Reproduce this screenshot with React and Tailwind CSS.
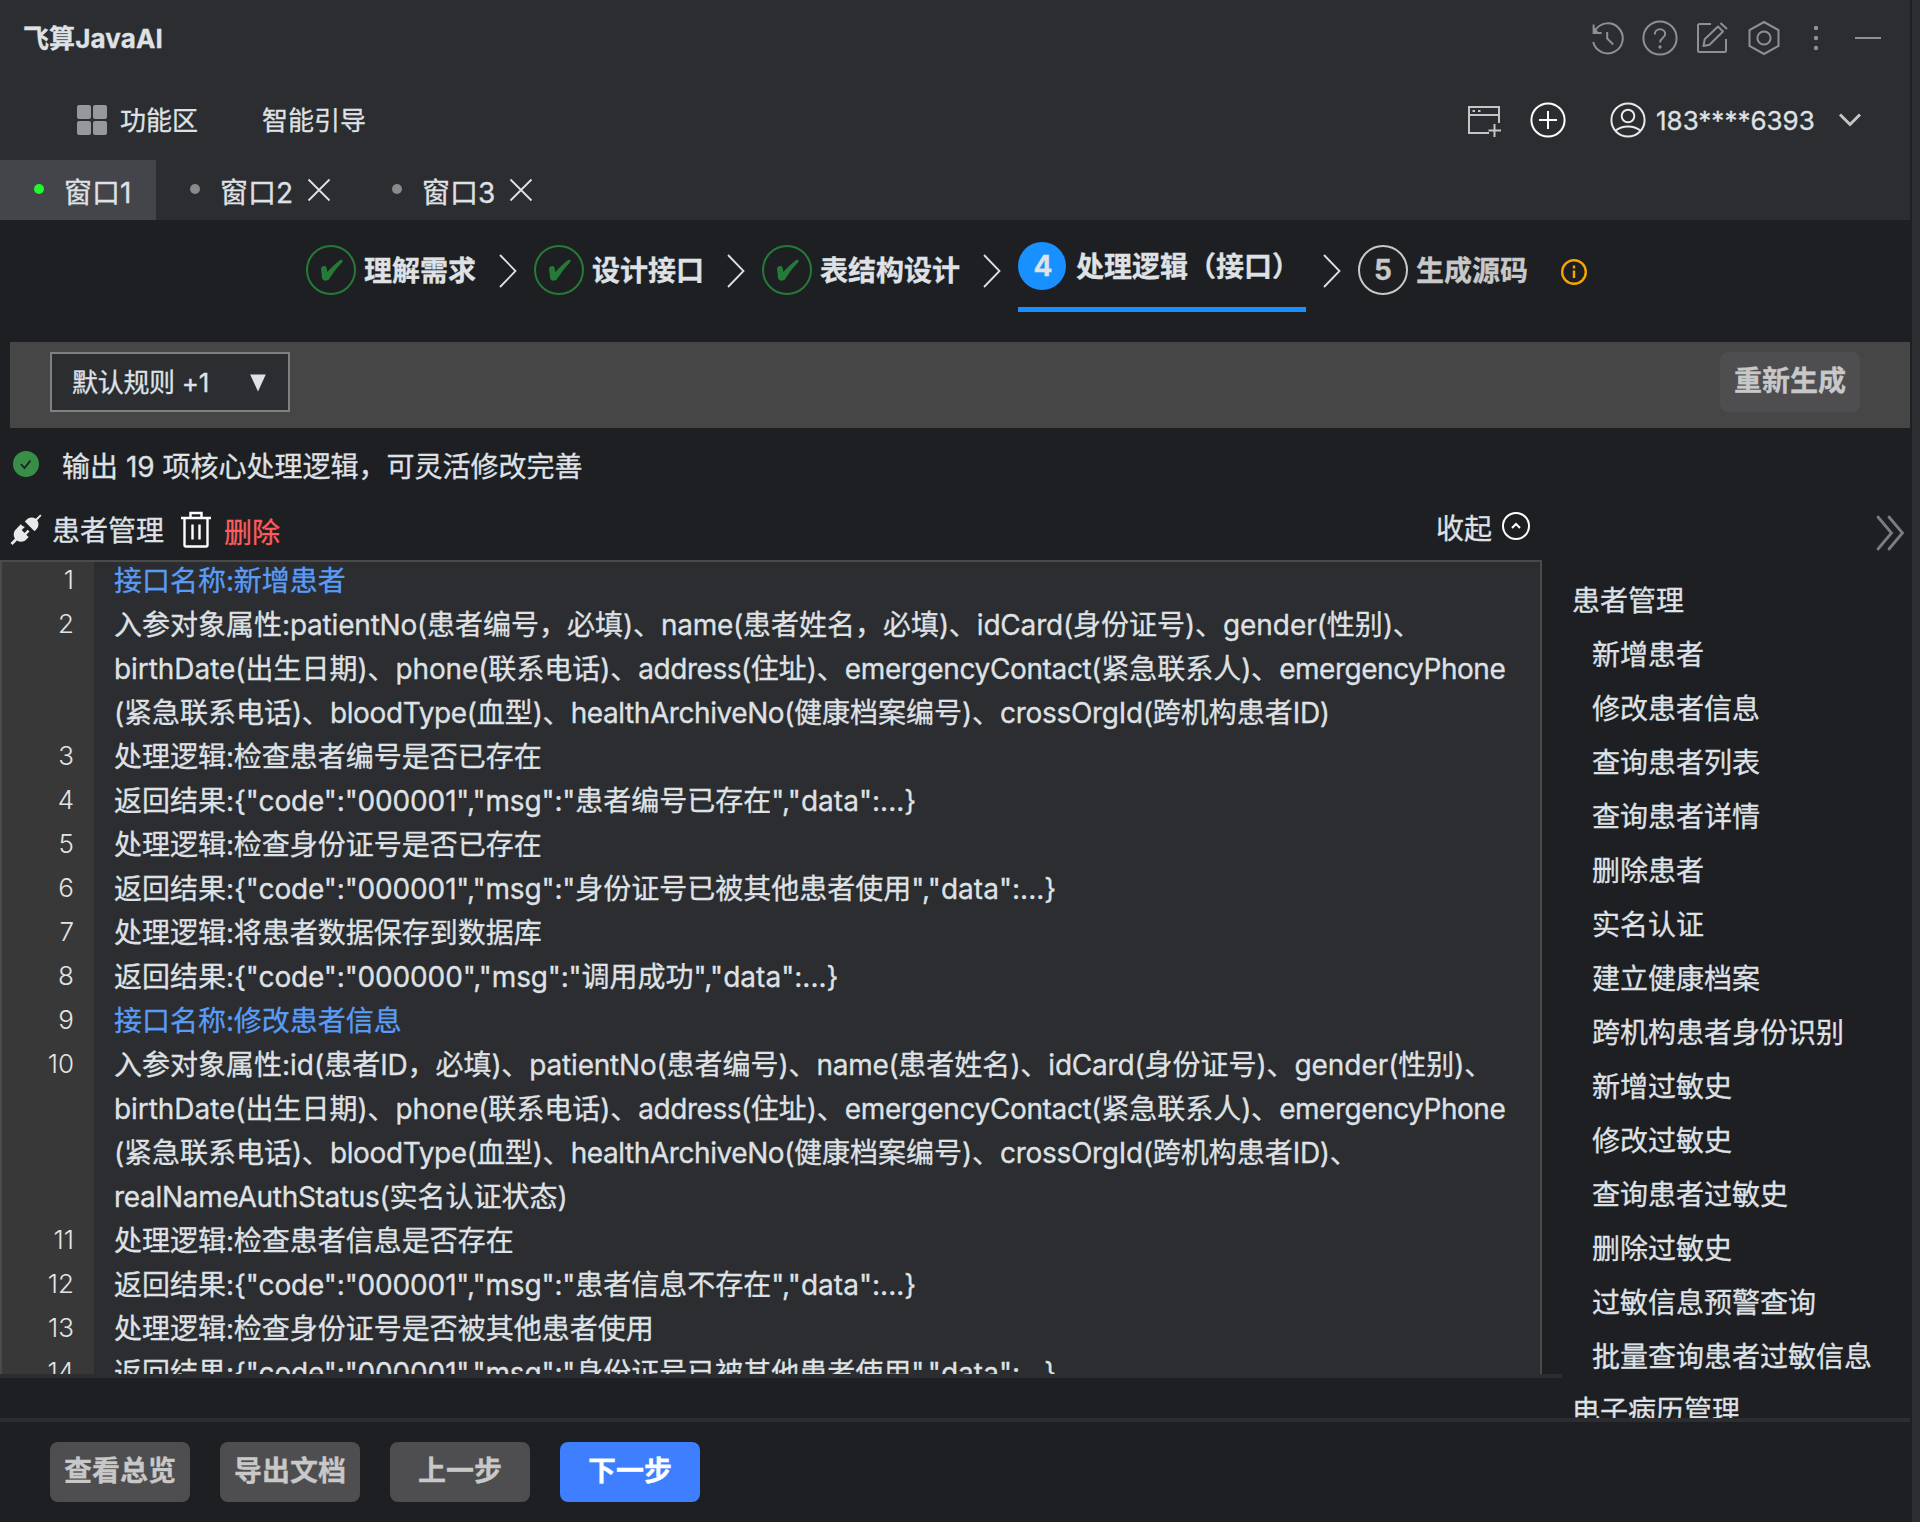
const steps = [
  { label: "理解需求", state: "done" },
  { label: "设计接口", state: "done" },
  { label: "表结构设计", state: "done" },
];

const code = [
  { n: 1, title: true, rows: ["接口名称:新增患者"] },
  {
    n: 2,
    rows: [
      "入参对象属性:patientNo(患者编号，必填)、name(患者姓名，必填)、idCard(身份证号)、gender(性别)、",
      "birthDate(出生日期)、phone(联系电话)、address(住址)、emergencyContact(紧急联系人)、emergencyPhone",
      "(紧急联系电话)、bloodType(血型)、healthArchiveNo(健康档案编号)、crossOrgId(跨机构患者ID)",
    ],
  },
  { n: 3, rows: ["处理逻辑:检查患者编号是否已存在"] },
  { n: 4, rows: ['返回结果:{"code":"000001","msg":"患者编号已存在","data":...}'] },
  { n: 5, rows: ["处理逻辑:检查身份证号是否已存在"] },
  { n: 6, rows: ['返回结果:{"code":"000001","msg":"身份证号已被其他患者使用","data":...}'] },
  { n: 7, rows: ["处理逻辑:将患者数据保存到数据库"] },
  { n: 8, rows: ['返回结果:{"code":"000000","msg":"调用成功","data":...}'] },
  { n: 9, title: true, rows: ["接口名称:修改患者信息"] },
  {
    n: 10,
    rows: [
      "入参对象属性:id(患者ID，必填)、patientNo(患者编号)、name(患者姓名)、idCard(身份证号)、gender(性别)、",
      "birthDate(出生日期)、phone(联系电话)、address(住址)、emergencyContact(紧急联系人)、emergencyPhone",
      "(紧急联系电话)、bloodType(血型)、healthArchiveNo(健康档案编号)、crossOrgId(跨机构患者ID)、",
      "realNameAuthStatus(实名认证状态)",
    ],
  },
  { n: 11, rows: ["处理逻辑:检查患者信息是否存在"] },
  { n: 12, rows: ['返回结果:{"code":"000001","msg":"患者信息不存在","data":...}'] },
  { n: 13, rows: ["处理逻辑:检查身份证号是否被其他患者使用"] },
  { n: 14, rows: ['返回结果:{"code":"000001","msg":"身份证号已被其他患者使用","data":...}'] },
];

const outline = [
  "新增患者",
  "修改患者信息",
  "查询患者列表",
  "查询患者详情",
  "删除患者",
  "实名认证",
  "建立健康档案",
  "跨机构患者身份识别",
  "新增过敏史",
  "修改过敏史",
  "查询患者过敏史",
  "删除过敏史",
  "过敏信息预警查询",
  "批量查询患者过敏信息",
];

/* Tracking of Latin runs, keyed by the letters they hold. */
const tracking = {
  patientNo: "tracking-[-0.2px]",
  idCard: "tracking-[-0.2px]",
  id: "tracking-[0px]",
  gender: "tracking-[-0.05px]",
  birthDate: "tracking-[-0.05px]",
  phone: "tracking-[-0.12px]",
  address: "tracking-[-0.45px]",
  emergencyContact: "tracking-[-0.37px]",
  emergencyPhone: "tracking-[-0.47px]",
  bloodType: "tracking-[-0.36px]",
  healthArchiveNo: "tracking-[-0.42px]",
  codemsg: "tracking-[-0.15px]",
  data: "tracking-[0.03px]",
};

function CodeText({ text }) {
  return text.split(/([\x20-\x7e]+)/).map((part, i) =>
    i % 2 ? (
      <span key={i} className={tracking[part.replace(/[^A-Za-z]/g, "")] || "tracking-[-0.3px]"}>
        {part}
      </span>
    ) : (
      part
    ),
  );
}

function Svg({ w, h, className = "", children, sw = 2 }) {
  return (
    <svg
      width={w}
      height={h}
      viewBox={`0 0 ${w} ${h}`}
      fill="none"
      stroke="currentColor"
      strokeWidth={sw}
      className={`block shrink-0 ${className}`}
    >
      {children}
    </svg>
  );
}

function TitleBar() {
  return (
    <div className="flex h-20 items-center justify-between pl-[23px] pr-[29px]">
      <span className="-mt-1 text-[26px] font-bold tracking-[0.1px]">飞算JavaAI</span>
      <div className="-mt-1 flex items-center text-[#8f9093]">
        <Svg w={36} h={36} className="mr-4">
          <path d="M3.200 22A15 15 0 1 0 5.500 9.700" />
          <path d="M3.600 4.500v8.600h8" />
          <path d="M4 12.500V8.500l3 3.500z" fill="currentColor" />
          <path d="M17.200 12v6.500l6 6" />
        </Svg>
        <Svg w={36} h={36} className="mr-4">
          <circle cx="18" cy="18" r="16.600" />
          <path d="M12.800 14.500c0-3.200 2.300-5.200 5.200-5.200s5.200 2 5.200 4.700c0 4-5.200 4.200-5.200 8.500" />
          <circle cx="18" cy="27" r="1.700" fill="currentColor" stroke="none" />
        </Svg>
        <Svg w={36} h={36} className="mr-4">
          <path d="M17 4H5.500a1.500 1.500 0 0 0-1.500 1.500v25A1.500 1.500 0 0 0 5.500 32h25a1.500 1.500 0 0 0 1.500-1.500V19" />
          <path d="m9.500 26 1.200-6.800L24 6.500l5 5-13.500 13.300z" strokeLinejoin="round" />
          <path d="m26.500 3 6.500 6" />
        </Svg>
        <Svg w={36} h={36} className="mr-[18px]">
          <path d="M18 2l14.500 8v16L18 34 3.500 26V10z" />
          <circle cx="18" cy="18" r="6.600" />
        </Svg>
        <Svg w={32} h={36} className="mr-[23px]">
          <g fill="currentColor" stroke="none">
            <circle cx="16" cy="8" r="2.200" />
            <circle cx="16" cy="18" r="2.200" />
            <circle cx="16" cy="28" r="2.200" />
          </g>
        </Svg>
        <div className="h-[2px] w-[26px] bg-[#8f9093]" />
      </div>
    </div>
  );
}

function MenuBar() {
  return (
    <div className="flex h-20 items-center justify-between pl-[77px] pr-[48px] text-[26px]">
      <div className="flex items-center">
        <div className="grid grid-cols-2 gap-[2px]">
          <i className="h-[14px] w-[14px] rounded-[2px] bg-[#97989b]" />
          <i className="h-[14px] w-[14px] rounded-[2px] bg-[#97989b]" />
          <i className="h-[14px] w-[14px] rounded-[2px] bg-[#97989b]" />
          <i className="h-[14px] w-[14px] rounded-[2px] bg-[#97989b]" />
        </div>
        <span className="ml-[13px] mt-[1px]">功能区</span>
        <span className="ml-[64px] mt-[1px]">智能引导</span>
      </div>
      <div className="flex items-center">
        <Svg w={38} h={36} className="mr-[26px] text-[#c4c5c7]">
          <path d="M33 21V5H3v26h20M3 13h30" />
          <path d="M28.500 22v13M22.500 28.500h12.500" />
          <path d="M6.500 9h2.500M12 9h2.500" />
        </Svg>
        <Svg w={36} h={36} className="mr-11 text-white">
          <circle cx="18" cy="18" r="16.600" />
          <path d="M9 18h18M18 9v18" />
        </Svg>
        <Svg w={36} h={36} className="mr-[10px] text-[#e8e9eb]">
          <circle cx="18" cy="18" r="16.600" />
          <circle cx="18" cy="14" r="6.300" />
          <path d="M5.500 28.500c7-5.500 18-5.500 25 0" />
        </Svg>
        <span className="w-[182px] whitespace-nowrap">183****6393</span>
        <Svg w={24} h={16} sw={3} className="text-[#c4c5c7]">
          <path d="m2 2.500 10 10 10-10" />
        </Svg>
      </div>
    </div>
  );
}

function CloseIcon() {
  return (
    <Svg w={24} h={24} sw={1.8} className="ml-[14px]">
      <path d="m1.500 1.500 21 21M22.500 1.500l-21 21" />
    </Svg>
  );
}

function WindowTabs() {
  return (
    <div className="flex h-[60px] text-[28px]">
      <div className="flex w-[156px] items-center bg-[#43454a] pl-[34px]">
        <i className="-mt-[2px] h-[10px] w-[10px] rounded-full bg-[#1ffa2f]" />
        <span className="ml-[20px] mt-[5px]">窗口1</span>
      </div>
      <div className="flex w-[202px] items-center pl-[34px]">
        <i className="-mt-[2px] h-[10px] w-[10px] rounded-full bg-[#8a8a8a]" />
        <span className="ml-[20px] mt-[5px]">窗口2</span>
        <CloseIcon />
      </div>
      <div className="flex w-[202px] items-center pl-[34px]">
        <i className="-mt-[2px] h-[10px] w-[10px] rounded-full bg-[#8a8a8a]" />
        <span className="ml-[20px] mt-[5px]">窗口3</span>
        <CloseIcon />
      </div>
    </div>
  );
}

function StepArrow({ className = "" }) {
  return (
    <Svg w={20} h={36} sw={1.8} className={className}>
      <path d="m2 2 15.500 16L2 34" />
    </Svg>
  );
}

function Stepper() {
  return (
    <div className="flex h-[122px] items-start pl-[306px] text-[28px] font-bold">
      {steps.map((s) => (
        <div key={s.label} className="mt-[25px] flex h-[50px] items-center">
          <div className="flex h-[50px] w-[50px] items-center justify-center rounded-full border-2 border-[#267a37] text-[#267a37]">
            <Svg w={26} h={26}>
              <path
                d="M3 11.500C3 9 7.500 8 8.500 10.500L9.300 15C13 11 17 6.500 22 3.200c2-1 3.500 0 2.300 1.800C19 10.500 15 16 11.500 21.500c-2 3-6.500 3-7.500-.500z"
                fill="currentColor"
                stroke="none"
              />
            </Svg>
          </div>
          <span className="ml-2 mt-[2px] whitespace-nowrap">{s.label}</span>
          <StepArrow className="ml-[22px] mr-4 mt-[2px]" />
        </div>
      ))}
      <div className="mt-[22px] flex h-[70px] w-[288px] items-start border-b-[5px] border-[#1890ff]">
        <div className="flex h-12 w-12 items-center justify-center rounded-full bg-[#1890ff] pl-[2px]">4</div>
        <span className="ml-[10px] mt-1 whitespace-nowrap">处理逻辑（接口）</span>
      </div>
      <div className="mt-[25px] flex h-[50px] items-center">
        <StepArrow className="ml-[16px] mr-[16px] mt-[2px]" />
        <div className="flex h-[50px] w-[50px] items-center justify-center rounded-full border-2 border-[#c8c8c8] text-[#c8c8c8]">
          5
        </div>
        <span className="ml-2 mt-[2px] text-[#c8c8c8]">生成源码</span>
        <Svg w={28} h={28} sw={2.4} className="ml-8 mt-1 text-[#f7a500]">
          <circle cx="14" cy="14" r="11.800" />
          <path d="M14 12.500V20M14 7.500v3" />
        </Svg>
      </div>
    </div>
  );
}

function RuleBar() {
  return (
    <div className="ml-[10px] flex h-[86px] items-start justify-between bg-[#464646] pl-10 pr-[50px] pt-[10px]">
      <div className="flex h-[60px] w-[240px] items-center justify-between border-2 border-[#808080] bg-[#2b2d30] pl-5 pr-[21px] text-[26px]">
        <span className="mt-[1px] tracking-[-0.3px]">默认规则 +1</span>
        <Svg w={18} h={18} className="mt-[2px]">
          <path d="M1.200.5h15.600L9 17.500z" fill="currentColor" stroke="none" />
        </Svg>
      </div>
      <div className="flex h-[60px] w-[140px] items-center justify-center rounded-lg bg-[#4e4e50] pb-[2px] text-[28px] font-bold text-[#c8c8c8]">
        重新生成
      </div>
    </div>
  );
}

function SectionHeader() {
  return (
    <div className="flex h-[60px] items-center pl-[10px] text-[28px]">
      <Svg w={32} h={32} className="text-[#e8e9eb]">
        <g fill="currentColor" stroke="none">
          <path d="M31.500 1.800 30.200.5l-4.400 4.300c-3-2-6.800-1.600-9.300 1l-1.700 1.700 9.700 9.700 1.700-1.700c2.600-2.500 3-6.300 1-9.300l4.300-4.400z" />
          <path d="M12.500 12 10.800 10.300 8.300 12.800 6 15.200c-2.600 2.500-3 6.300-1 9.300L.5 29l2 2 4.500-4.500c3 2 6.800 1.600 9.300-1l2.400-2.400-2.400-2.400 3.200-3.200-1.800-1.800-3.200 3.200-2.800-2.800 3.200-3.200z" />
        </g>
      </Svg>
      <span className="ml-[10px] mt-[1px]">患者管理</span>
      <Svg w={32} h={38} sw={2.400} className="-mt-[2px] ml-4 text-white">
        <path d="M1 8h30M10.500 8V3h11v5M4.500 8v27a1.500 1.500 0 0 0 1.500 1.500h20a1.500 1.500 0 0 0 1.500-1.500V8M12.500 14.500v15M19.500 14.500v15" />
      </Svg>
      <span className="ml-3 mt-[5px] text-[#ff5b5b]">删除</span>
      <span className="ml-auto -mt-[3px]">收起</span>
      <Svg w={28} h={28} className="-mt-2 ml-[10px] mr-8 text-white">
        <circle cx="14" cy="14" r="13" />
        <path d="m10 16 4-4 4 4" />
      </Svg>
    </div>
  );
}

function Editor() {
  return (
    <div className="flex h-[818px] w-[1562px] flex-col border-b-4 border-[#2b2d30]">
      <div className="h-[814px] w-[1542px] overflow-hidden border-x-2 border-t-2 border-[#4a4a48] bg-[#2b2d30]">
        <div className="flex flex-col text-[28px] leading-[44px]">
          {code.map((c) => (
            <div key={c.n} className="flex items-stretch">
              <div className="w-[92px] shrink-0 bg-[#383838] pr-[20px] text-right">
                <div className="relative -top-1 text-[26px] font-light text-[#e4e4e4] [-webkit-text-stroke:0px]">
                  {c.n}
                </div>
              </div>
              <div className={c.title ? "pl-5 text-[#5a9cf5]" : "pl-5"}>
                {c.rows.map((r) => (
                  <div key={r} className="relative -top-[3px] whitespace-nowrap">
                    <CodeText text={r} />
                  </div>
                ))}
              </div>
            </div>
          ))}
        </div>
      </div>
    </div>
  );
}

function Outline() {
  return (
    <div className="flex h-[918px] flex-1 flex-col overflow-hidden pl-[10px] text-[28px] leading-[54px]">
      <div className="flex h-[74px] shrink-0 items-start justify-end pr-[4px] pt-[15px] text-[#7c7d80]">
        <Svg w={30} h={36} sw={2.800}>
          <path d="m2 2 13.500 16L2 34M13 2l13.500 16L13 34" strokeLinecap="round" />
        </Svg>
      </div>
      <span className="shrink-0">患者管理</span>
      {outline.map((o) => (
        <span key={o} className="shrink-0 pl-5">
          {o}
        </span>
      ))}
      <span className="shrink-0">电子病历管理</span>
    </div>
  );
}

function Button({ children, primary }) {
  return (
    <div
      className={
        primary
          ? "flex h-[60px] w-[140px] items-center justify-center rounded-lg bg-[#3d7fff] pb-[3px] font-bold text-white"
          : "flex h-[60px] w-[140px] items-center justify-center rounded-lg bg-[#4e4e50] pb-[3px] font-bold text-[#c8c8c8]"
      }
    >
      {children}
    </div>
  );
}

export default function App() {
  return (
    <div className="flex h-[1522px] w-[1920px] justify-between overflow-hidden bg-[#1e1f23] font-['Inter','Noto_Sans_CJK_SC',sans-serif] text-[#dfe1e5] [-webkit-text-stroke:0.3px]">
      <div className="flex w-[1910px] flex-col">
        <div className="bg-[#2b2d30]">
          <TitleBar />
          <MenuBar />
          <WindowTabs />
        </div>
        <Stepper />
        <RuleBar />
        <div className="flex h-[72px] items-center pl-[13px] text-[28px]">
          <Svg w={26} h={26}>
            <circle cx="13" cy="13" r="13" fill="#388e47" stroke="none" />
            <path d="m8 13 3.500 4 6-7.500" stroke="#1e1f23" strokeWidth="1.800" />
          </Svg>
          <span className="ml-[23px] mt-[5px]">输出 19 项核心处理逻辑，可灵活修改完善</span>
        </div>
        <div className="flex h-[918px]">
          <div className="flex w-[1562px] flex-col">
            <SectionHeader />
            <Editor />
          </div>
          <Outline />
        </div>
        <div className="h-1 bg-[#2b2d30]" />
        <div className="flex gap-[30px] pl-[50px] pt-5 text-[28px]">
          <Button>查看总览</Button>
          <Button>导出文档</Button>
          <Button>上一步</Button>
          <Button primary>下一步</Button>
        </div>
      </div>
      <div className="w-2 bg-[#2b2d30]" />
    </div>
  );
}
